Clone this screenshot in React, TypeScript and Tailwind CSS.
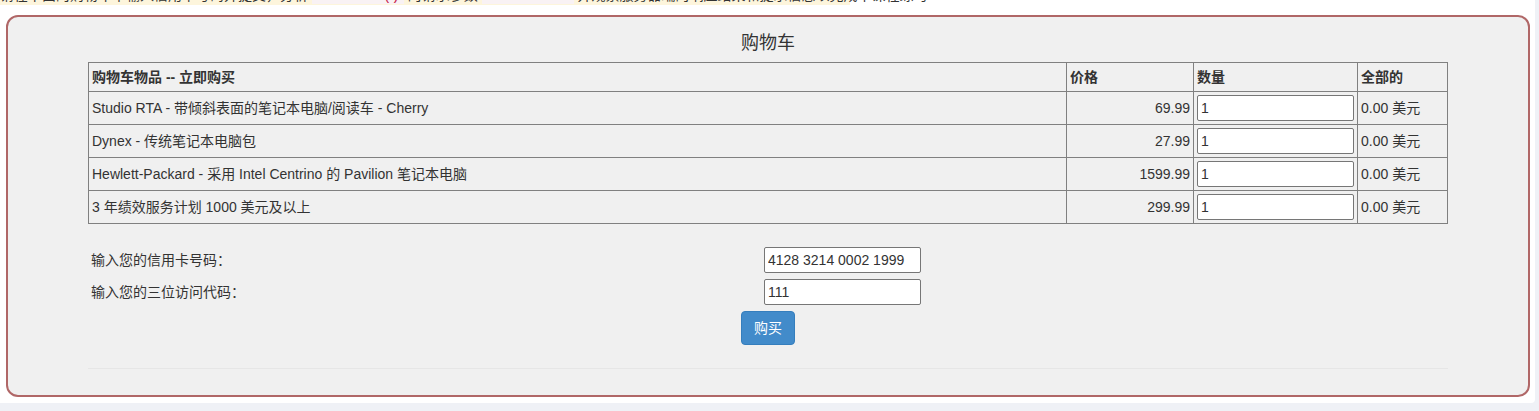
import React from 'react';

const items = [
  { name: 'Studio RTA - 带倾斜表面的笔记本电脑/阅读车 - Cherry', price: '69.99' },
  { name: 'Dynex - 传统笔记本电脑包', price: '27.99' },
  { name: 'Hewlett-Packard - 采用 Intel Centrino 的 Pavilion 笔记本电脑', price: '1599.99' },
  { name: '3 年绩效服务计划 1000 美元及以上', price: '299.99' },
];

const font = { fontFamily: '"Liberation Sans", "Noto Sans CJK SC", sans-serif' };

const App = () => {
  return (
    <div className="min-h-[411px] bg-[#eff1f6] text-[#333] text-[14px]" style={font}>
      <div className="w-[1535px] h-[403px] bg-white rounded-br-[4px] flex flex-col">
        {/* hint line scrolled mostly out of view above the panel */}
        <div className="h-[5px] overflow-hidden">
          <div className="-mt-[15px] w-[850px] bg-[#fdf5dc] leading-[20px] whitespace-nowrap text-[#333]">
            请在下面的购物车中输入信用卡号码并提交，分析 <code className="text-[#c7254e] bg-[#f9f2f4] px-1">checkout()</code> 的请求参数 <code className="text-[#c7254e] bg-[#f9f2f4] px-1">field1=xxx</code> 并观察服务器端的响应结果和提示信息以完成本课程练习
          </div>
        </div>

        <div className="mt-[10px] ml-[6px] w-[1524px] h-[382px] border-2 border-[#b06767] rounded-[12px] bg-[#f0f0f0] flex flex-col items-center">
          <h2 className="mt-[14px] text-[18px] leading-[24px] text-[#333]">购物车</h2>

          <table className="mt-[7px] w-[1360px] border-collapse border border-[#808080] text-[14px]">
            <thead>
              <tr className="h-[29px]">
                <th className="border border-[#808080] text-left font-bold px-[3px] w-[978px]">购物车物品 -- 立即购买</th>
                <th className="border border-[#808080] text-left font-bold px-[3px] w-[127px]">价格</th>
                <th className="border border-[#808080] text-left font-bold px-[3px] w-[164px]">数量</th>
                <th className="border border-[#808080] text-left font-bold px-[3px]">全部的</th>
              </tr>
            </thead>
            <tbody>
              {items.map((item) => (
                <tr key={item.name} className="h-[33px]">
                  <td className="border border-[#808080] px-[3px] pt-[1px]">{item.name}</td>
                  <td className="border border-[#808080] px-[3px] pt-[1px] text-right">{item.price}</td>
                  <td className="border border-[#808080] px-[3px]">
                    <input
                      defaultValue="1"
                      className="w-[157px] h-[26px] bg-white border border-[#767676] rounded-[2px] px-[3px] text-[14px] outline-none"
                    />
                  </td>
                  <td className="border border-[#808080] px-[3px] pt-[1px]">0.00 美元</td>
                </tr>
              ))}
            </tbody>
          </table>

          <div className="mt-[23px] w-[1360px] grid grid-cols-[676px_1fr] gap-y-[6px] items-center">
            <div className="pl-[3px]">输入您的信用卡号码：</div>
            <input
              defaultValue="4128 3214 0002 1999"
              className="w-[157px] h-[26px] bg-white border border-[#767676] rounded-[2px] px-[3px] text-[14px] outline-none"
            />
            <div className="pl-[3px]">输入您的三位访问代码：</div>
            <input
              defaultValue="111"
              className="w-[157px] h-[26px] bg-white border border-[#767676] rounded-[2px] px-[3px] text-[14px] outline-none"
            />
          </div>

          <button className="mt-[6px] w-[54px] h-[34px] bg-[#428bca] border border-[#357ebd] rounded-[4px] text-white text-[14px]">
            购买
          </button>

          <div className="mt-[23px] w-[1360px] border-t border-[#e6e6e6]" />
        </div>
      </div>
    </div>
  );
};

export default App;
